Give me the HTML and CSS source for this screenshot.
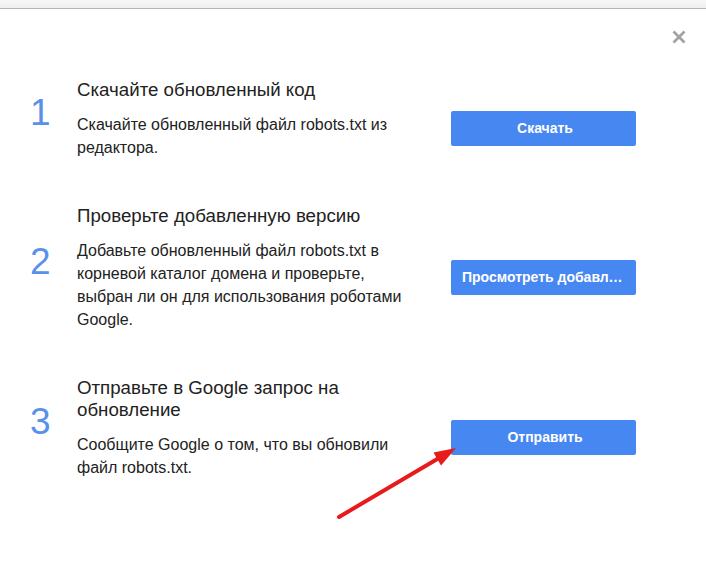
FILE: index.html
```html
<!DOCTYPE html>
<html lang="ru">
  <head>
    <meta charset="UTF-8" />
    <meta name="viewport" content="width=device-width, initial-scale=1.0" />
    <title>Отправка robots.txt</title>
    <link rel="stylesheet" href="styles.css">
  </head>

  <body>
    <div class="topbar"></div>

    <div class="dialog">
      <button class="close" aria-label="Закрыть">
        <svg width="14" height="14" viewBox="0 0 14 14">
          <path d="M1.5 1.5 L12.5 12.5 M12.5 1.5 L1.5 12.5" stroke="#a3a3a3" stroke-width="2.8" />
        </svg>
      </button>

      <div class="steps">
        <div class="step">
          <div class="step-num">1</div>
          <div class="step-info">
            <div class="step-title">Скачайте обновленный код</div>
            <div class="step-text">Скачайте обновленный файл robots.txt из редактора.</div>
          </div>
          <button class="step-button">Скачать</button>
        </div>

        <div class="step">
          <div class="step-num">2</div>
          <div class="step-info">
            <div class="step-title">Проверьте добавленную версию</div>
            <div class="step-text">Добавьте обновленный файл robots.txt в корневой каталог домена и проверьте, выбран ли он для использования роботами Google.</div>
          </div>
          <button class="step-button">Просмотреть добавленную версию</button>
        </div>

        <div class="step">
          <div class="step-num">3</div>
          <div class="step-info">
            <div class="step-title">Отправьте в Google запрос на обновление</div>
            <div class="step-text">Сообщите Google о том, что вы обновили файл robots.txt.</div>
          </div>
          <button class="step-button">Отправить</button>
        </div>
      </div>

      <svg class="pointer" width="706" height="578" viewBox="0 0 706 578">
        <line x1="339" y1="517" x2="439" y2="458" stroke="#e81a1c" stroke-width="4" stroke-linecap="round" />
        <polygon points="456,448 441,465.5 433.5,452.5" fill="#e81a1c" />
      </svg>
    </div>
  </body>
</html>
```

FILE: styles.css
```css
body {
  margin: 0;
  font-family: "Liberation Sans", Arial, sans-serif;
  background-color: white;
  color: #222;
}

.topbar {
  height: 8px;
  background: linear-gradient(#f7f7f7, #efefef);
  border-bottom: 1px solid #b4b4b4;
}

.dialog {
  position: relative;
  height: 569px;
}

.close {
  position: absolute;
  top: 21px;
  right: 20px;
  padding: 0;
  border: none;
  background: none;
  cursor: pointer;
}

.close svg {
  display: block;
}

.steps {
  display: flex;
  flex-direction: column;
  gap: 46px;
  padding: 70px 0 0 30px;
}

.step {
  display: flex;
  align-items: center;
}

.step-num {
  width: 47px;
  margin-bottom: 14px;
  font-size: 37px;
  line-height: 37px;
  color: #5890ea;
}

.step-info {
  width: 336px;
  margin-right: 38px;
}

.step-title {
  font-size: 18.7px;
  line-height: 22px;
  color: #222;
  margin-bottom: 12px;
}

.step-text {
  font-size: 16px;
  line-height: 23px;
  color: #222;
}

.step-button {
  width: 185px;
  height: 35px;
  margin-top: 18px;
  padding: 0 8px 0 11px;
  border: none;
  border-radius: 2px;
  background-color: #4787f2;
  color: white;
  font-family: "Liberation Sans", Arial, sans-serif;
  font-size: 14px;
  font-weight: bold;
  text-align: center;
  white-space: nowrap;
  overflow: hidden;
  text-overflow: ellipsis;
  cursor: pointer;
}

.pointer {
  position: absolute;
  top: -9px;
  left: 0;
  pointer-events: none;
}
```
